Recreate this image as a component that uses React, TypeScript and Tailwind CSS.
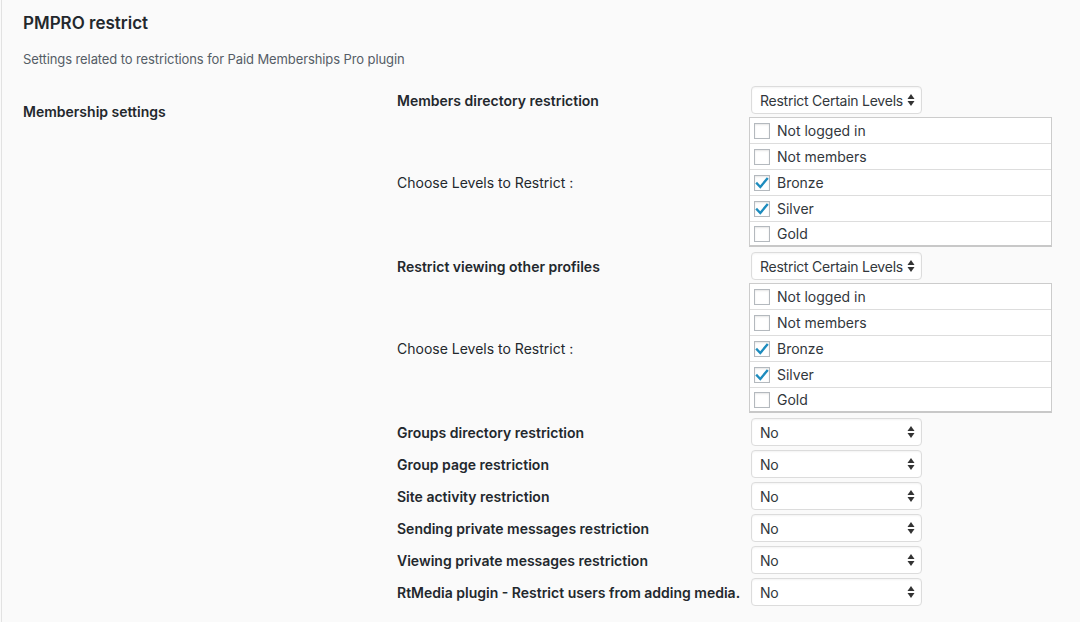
import React from "react";

const font = { fontFamily: "Inter, 'Noto Sans', sans-serif" };

function Arrows() {
  return (
    <svg width="8" height="14" viewBox="0 0 8 14" className="absolute right-[6px] top-1/2 -translate-y-1/2">
      <path d="M4 1 L7.5 6 L0.5 6 Z" fill="#333" />
      <path d="M4 13 L7.5 8 L0.5 8 Z" fill="#333" />
    </svg>
  );
}

function Select({ value }: { value: string }) {
  return (
    <div className="relative w-[171px] h-[28px] bg-white border border-[#dcdcdc] rounded-[4px] shadow-[inset_0_1px_2px_rgba(0,0,0,0.05)] flex items-center pl-[8px] text-[14px] tracking-[-0.25px] text-[#32373c]">
      {value}
      <Arrows />
    </div>
  );
}

function Check({ checked }: { checked: boolean }) {
  return (
    <div className="w-[16px] h-[16px] border border-[#b4b9be] bg-white shadow-[inset_0_1px_2px_rgba(0,0,0,0.1)] flex items-center justify-center">
      {checked && (
        <svg width="14" height="14" viewBox="0 0 14 14">
          <path d="M2 7.5 L5.3 11 L12 3" fill="none" stroke="#1e8cbe" strokeWidth="2.4" strokeLinecap="square" />
        </svg>
      )}
    </div>
  );
}

const levels: [string, boolean][] = [
  ["Not logged in", false],
  ["Not members", false],
  ["Bronze", true],
  ["Silver", true],
  ["Gold", false],
];

function LevelList() {
  return (
    <div className="w-[303px] -ml-[2px] bg-white border border-[#cccccc] border-b-2 border-b-[#c8c8c8]">
      {levels.map(([name, c], i) => (
        <div
          key={name}
          className={`flex items-center gap-[7px] pl-[4px] text-[14px] text-[#32373c] ${i > 0 ? "border-t border-[#dddddd]" : ""} ${i === 0 ? "h-[25px]" : i === 4 ? "h-[24px]" : "h-[26px]"}`}
        >
          <Check checked={c} />
          <span>{name}</span>
        </div>
      ))}
    </div>
  );
}

function Row({ label, bold = true, children, mt = 0 }: { label: string; bold?: boolean; children: React.ReactNode; mt?: number }) {
  return (
    <div className="flex items-center" style={{ marginTop: mt }}>
      <div className={`w-[354px] text-[14px] text-[#23282d] ${bold ? "font-semibold" : ""}`}>{label}</div>
      {children}
    </div>
  );
}

export default function App() {
  const noRows = [
    "Groups directory restriction",
    "Group page restriction",
    "Site activity restriction",
    "Sending private messages restriction",
    "Viewing private messages restriction",
    "RtMedia plugin - Restrict users from adding media.",
  ];
  return (
    <div className="w-[1080px] h-[622px] bg-[#fafafa] overflow-hidden" style={font}>
      <div className="h-full ml-px border-l border-[#e2e2e2] pl-[21px]">
        <h1 className="pt-[12px] text-[17px] leading-[22px] font-semibold text-[#23282d]">PMPRO restrict</h1>
        <p className="mt-[16px] text-[13px] leading-[18px] tracking-[-0.1px] text-[#555d66]">
          Settings related to restrictions for Paid Memberships Pro plugin
        </p>
        <div className="mt-[18px] flex">
          <div className="w-[374px] pt-[17px] text-[14px] leading-[18px] font-semibold text-[#23282d]">Membership settings</div>
          <div className="flex flex-col">
            <Row label="Members directory restriction">
              <Select value="Restrict Certain Levels" />
            </Row>
            <Row label="Choose Levels to Restrict :" bold={false} mt={3}>
              <LevelList />
            </Row>
            <Row label="Restrict viewing other profiles" mt={5}>
              <Select value="Restrict Certain Levels" />
            </Row>
            <Row label="Choose Levels to Restrict :" bold={false} mt={3}>
              <LevelList />
            </Row>
            {noRows.map((l, i) => (
              <Row key={l} label={l} mt={i === 0 ? 5 : 4}>
                <Select value="No" />
              </Row>
            ))}
          </div>
        </div>
      </div>
    </div>
  );
}
